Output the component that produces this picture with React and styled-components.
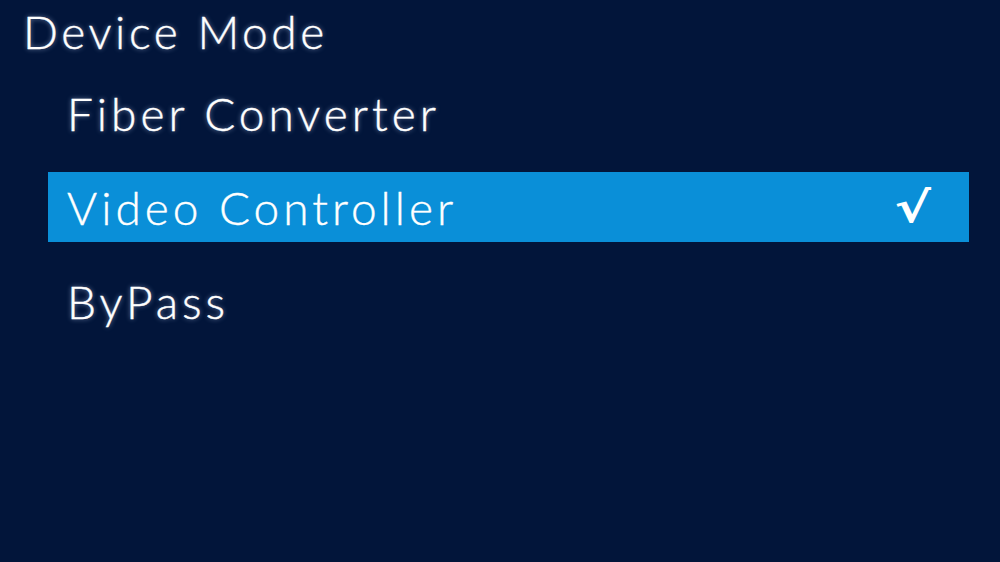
import React from 'react';
import styled, { createGlobalStyle } from 'styled-components';

const GlobalStyle = createGlobalStyle`
  html, body {
    margin: 0;
    padding: 0;
    background: #02153a;
  }
  body {
    font-family: Lato, "Open Sans", sans-serif;
  }
`;

const Screen = styled.div`
  width: 1000px;
  height: 562px;
  background: #02153a;
  overflow: hidden;
`;

const Title = styled.h1`
  margin: 0 0 0 23px;
  height: 64px;
  line-height: 64px;
  font-size: 46px;
  font-weight: 300;
  letter-spacing: 3.6px;
  color: #ffffff;
  -webkit-text-stroke: 0.4px #ffffff;
  text-shadow: 0 0 5px rgba(200, 220, 255, 0.6);
`;

const List = styled.ul`
  list-style: none;
  margin: 14px 0 0 48px;
  padding: 0;
  width: 921px;
  display: flex;
  flex-direction: column;
  gap: 24px;
`;

const Item = styled.li`
  display: flex;
  align-items: center;
  justify-content: space-between;
  height: 70px;
  padding: 0 38px 0 19px;
  box-sizing: border-box;
  background: ${(p) => (p.$selected ? '#0a8fd8' : 'transparent')};
  color: #ffffff;
  font-size: 46px;
  font-weight: 300;
  letter-spacing: 4px;
  -webkit-text-stroke: 0.4px #ffffff;
  text-shadow: ${(p) => (p.$selected ? 'none' : '0 0 5px rgba(200, 220, 255, 0.6)')};
`;

const Check = styled.span`
  display: inline-block;
  font-family: "DejaVu Sans", sans-serif;
  font-size: 42px;
  font-weight: 700;
  letter-spacing: 0;
  -webkit-text-stroke: 0;
  transform: scaleX(1.3);
  transform-origin: right center;
`;

const modes = ['Fiber Converter', 'Video Controller', 'ByPass'];

export default function App() {
  const selected = 'Video Controller';
  return (
    <>
      <GlobalStyle />
      <Screen>
        <Title>Device Mode</Title>
        <List>
          {modes.map((m) => (
            <Item key={m} $selected={m === selected}>
              <span>{m}</span>
              {m === selected && <Check>√</Check>}
            </Item>
          ))}
        </List>
      </Screen>
    </>
  );
}
